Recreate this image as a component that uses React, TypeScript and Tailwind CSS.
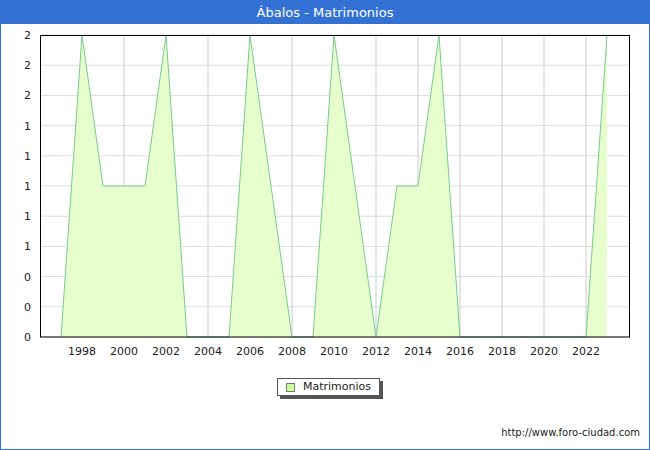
import React from "react";

const data: [number, number][] = [
  [1997, 0], [1998, 2], [1999, 1], [2000, 1], [2001, 1], [2002, 2], [2003, 0], [2004, 0], [2005, 0],
  [2006, 2], [2007, 1], [2008, 0], [2009, 0], [2010, 2], [2011, 1], [2012, 0], [2013, 1], [2014, 1],
  [2015, 2], [2016, 0], [2017, 0], [2018, 0], [2019, 0], [2020, 0], [2021, 0], [2022, 0], [2023, 2],
];
const X = (y: number) => 40 + (y - 1996) * 21;
const Y = (v: number) => 337 - v * 151;

export default function App() {
  const line = data.map(([a, b]) => `${X(a)},${Y(b)}`).join(" ");
  const area = `${X(1997)},337 ${line} ${X(2023)},337`;
  const yl = ["0", "0", "0", "1", "1", "1", "1", "1", "2", "2", "2"];
  const years = [1998, 2000, 2002, 2004, 2006, 2008, 2010, 2012, 2014, 2016, 2018, 2020, 2022];
  return (
    <div className="w-[650px] h-[450px] border border-[#3371d4] bg-white flex flex-col" style={{ fontFamily: "'DejaVu Sans', Verdana, sans-serif" }}>
      <div className="h-[23px] bg-[#3371d4] text-white text-[13px] flex items-center justify-center shrink-0">Ábalos - Matrimonios</div>
      <div className="relative flex-1">
        <svg width="648" height="340" className="block">
          <g transform="translate(-1,-24)">
            {yl.map((_, i) => (
              <line key={i} x1={40} x2={630} y1={337 - 30.2 * i} y2={337 - 30.2 * i} stroke="#dddddd" />
            ))}
            {years.map((y) => (
              <line key={y} x1={X(y)} x2={X(y)} y1={35} y2={337} stroke="#cccccc" />
            ))}
            <polygon points={area} fill="#e6ffcc" />
            <polyline points={line} fill="none" stroke="#7cc98f" strokeWidth="1" />
            <rect x={40.5} y={35.5} width={589} height={301.5} fill="none" stroke="#000" />
            {yl.map((t, i) => (
              <text key={i} x={31} y={341 - 30.2 * i} fontSize="11" textAnchor="end" fill="#222">{t}</text>
            ))}
            {years.map((y) => (
              <text key={y} x={X(y)} y={355} fontSize="11" textAnchor="middle" fill="#222">{y}</text>
            ))}
          </g>
        </svg>
        <div className="absolute left-[276px] top-[354px] h-[18px] px-2 flex items-center gap-2 bg-white border border-[#555] shadow-[3px_3px_0_#555] text-[11px] text-[#222]">
          <span className="w-[9px] h-[9px] bg-[#ccff99] border border-[#777]" />
          Matrimonios
        </div>
        <div className="absolute right-[9px] bottom-[9px] text-[10px] text-[#222]">http://www.foro-ciudad.com</div>
      </div>
    </div>
  );
}
